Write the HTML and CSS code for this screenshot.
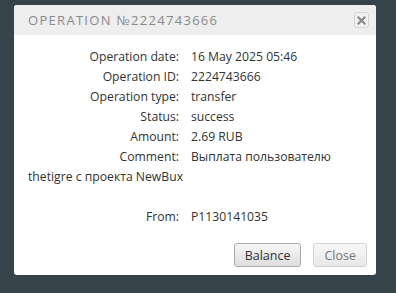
FILE: index.html
```html
<!DOCTYPE html>
<html>
<head>
<meta charset="utf-8">
<link rel="stylesheet" href="styles.css">
</head>
<body>
<div class="page">
  <div class="dialog">
    <div class="titlebar">
      <span class="title">Operation №2224743666</span>
      <button class="x-btn" aria-label="close">
        <svg width="9" height="9" viewBox="0 0 9 9"><path d="M1.5 1.5 L7.5 7.5 M7.5 1.5 L1.5 7.5" stroke="#8a8a8a" stroke-width="2.2" stroke-linecap="square"/></svg>
      </button>
    </div>
    <div class="content">
      <p class="row"><span class="label">Operation date:</span>16 May 2025 05:46</p>
      <p class="row"><span class="label">Operation ID:</span>2224743666</p>
      <p class="row"><span class="label">Operation type:</span>transfer</p>
      <p class="row"><span class="label">Status:</span>success</p>
      <p class="row"><span class="label">Amount:</span>2.69 RUB</p>
      <p class="row"><span class="label">Comment:</span>Выплата пользователю thetigre с проекта NewBux</p>
      <p class="row empty">&nbsp;</p>
      <p class="row"><span class="label">From:</span>P1130141035</p>
    </div>
    <div class="buttons">
      <button class="btn">Balance</button>
      <button class="btn light">Close</button>
    </div>
  </div>
</div>
</body>
</html>
```
FILE: styles.css
```css
html, body {
  margin: 0;
  padding: 0;
}
body {
  background: #36434a;
  width: 396px;
  height: 293px;
  overflow: hidden;
  font-family: "Open Sans", "DejaVu Sans", sans-serif;
}
.page {
  padding: 5px 20px 0 14px;
}
.dialog {
  width: 362px;
  height: 270px;
  background: #fff;
  border-radius: 3px;
  display: flex;
  flex-direction: column;
}
.titlebar {
  height: 30px;
  background: #eeeeee;
  border-radius: 3px 3px 0 0;
  display: flex;
  align-items: center;
  justify-content: space-between;
  padding: 0 6px 0 14px;
}
.title {
  font-size: 13px;
  text-transform: uppercase;
  letter-spacing: 1.3px;
  color: #8a8a8a;
  font-weight: 500;
}
.x-btn {
  width: 15px;
  height: 16px;
  padding: 0;
  margin-right: 1px;
  border: 1px solid #d6d6d6;
  border-radius: 3px;
  background: #f0f0f0;
  display: flex;
  align-items: center;
  justify-content: center;
}
.content {
  padding: 12px 14px 0 14px;
  font-size: 12.2px;
  color: #333;
}
.row {
  margin: 0;
  line-height: 20px;
}
.label {
  display: inline-block;
  width: 151px;
  text-align: right;
  margin-right: 12px;
}
.buttons {
  display: flex;
  justify-content: flex-end;
  gap: 12px;
  padding: 0 9px 0 0;
  margin-top: auto;
  margin-bottom: 8px;
}
.btn {
  height: 24px;
  padding: 0 10px;
  font-family: inherit;
  font-size: 12.5px;
  color: #333;
  border: 1px solid #a9a9a9;
  border-radius: 3px;
  background: linear-gradient(#f6f6f6, #dedede);
}
.btn.light {
  color: #777;
  border-color: #d3d3d3;
  background: linear-gradient(#f8f8f8, #e8e8e8);
}
```
